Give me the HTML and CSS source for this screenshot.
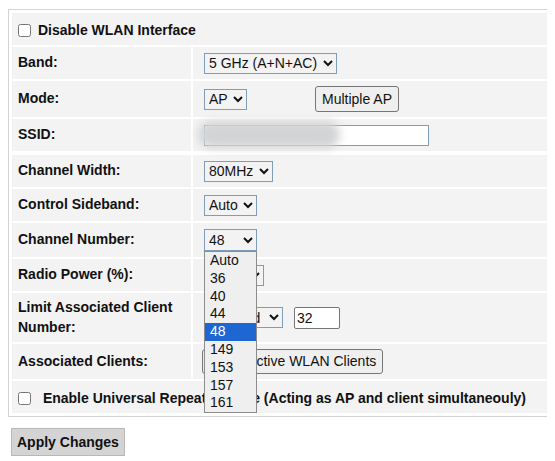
FILE: index.html
```html
<!DOCTYPE html>
<html lang="en">
<head>
    <meta charset="UTF-8">
    <meta name="viewport" content="width=device-width, initial-scale=1.0">
    <title>WLAN Basic Settings</title>
    <link rel="stylesheet" href="styles.css">
</head>
<body>
<form method="post" action="/boafrm/formWlanSetup">
    <div class="frame">
        <table class="tab">
            <tr class="ltr">
                <td colspan="2" class="chk"><input type="checkbox" name="wlanDisabled"> Disable WLAN Interface</td>
            </tr>
            <tr class="ltr">
                <td class="lbl">Band:</td>
                <td class="val">
                    <select name="band">
                        <option>5 GHz (A)</option>
                        <option>5 GHz (N)</option>
                        <option>5 GHz (A+N)</option>
                        <option>5 GHz (AC)</option>
                        <option selected>5 GHz (A+N+AC)</option>
                    </select>
                </td>
            </tr>
            <tr class="ltr">
                <td class="lbl">Mode:</td>
                <td class="val">
                    <select name="mode"><option selected>AP</option></select><input class="btn multi" type="button" value="Multiple AP">
                </td>
            </tr>
            <tr class="ltr">
                <td class="lbl">SSID:</td>
                <td class="val ssid">
                    <input class="txt" type="text" name="ssid" value="">
                    <div class="smudge"></div>
                </td>
            </tr>
            <tr class="gap"><td colspan="2"></td></tr>
            <tr class="ltr">
                <td class="lbl">Channel Width:</td>
                <td class="val">
                    <select name="chanwid">
                        <option>20MHz</option>
                        <option>40MHz</option>
                        <option selected>80MHz</option>
                    </select>
                </td>
            </tr>
            <tr class="ltr">
                <td class="lbl">Control Sideband:</td>
                <td class="val">
                    <select name="ctlband"><option selected>Auto</option></select>
                </td>
            </tr>
            <tr class="ltr tall">
                <td class="lbl">Channel Number:</td>
                <td class="val">
                    <span class="pick">
                        <select name="chan">
                            <option>Auto</option>
                            <option>36</option>
                            <option>40</option>
                            <option>44</option>
                            <option selected>48</option>
                            <option>149</option>
                            <option>153</option>
                            <option>157</option>
                            <option>161</option>
                        </select>
                        <ul class="drop">
                            <li>Auto</li>
                            <li>36</li>
                            <li>40</li>
                            <li>44</li>
                            <li class="on">48</li>
                            <li>149</li>
                            <li>153</li>
                            <li>157</li>
                            <li>161</li>
                        </ul>
                    </span>
                </td>
            </tr>
            <tr class="ltr">
                <td class="lbl">Radio Power (%):</td>
                <td class="val">
                    <select name="RFPower">
                        <option selected>100%</option>
                        <option>70%</option>
                        <option>50%</option>
                        <option>35%</option>
                        <option>15%</option>
                    </select>
                </td>
            </tr>
            <tr class="ltr">
                <td class="lbl">Limit Associated Client Number:</td>
                <td class="val">
                    <select name="wl_limitstanum">
                        <option>Disabled</option>
                        <option selected>Enabled</option>
                    </select><input class="txt num" type="text" name="wl_stanum" value="32">
                </td>
            </tr>
            <tr class="ltr">
                <td class="lbl">Associated Clients:</td>
                <td class="val">
                    <input class="btn clients" type="button" value="Show Active WLAN Clients">
                </td>
            </tr>
            <tr class="ltr">
                <td colspan="2" class="chk"><input class="wide" type="checkbox" name="repeaterEnabled"> Enable Universal Repeater Mode (Acting as AP and client simultaneouly)</td>
            </tr>
        </table>
    </div>
    <input class="apply" type="submit" value="Apply Changes">
</form>
</body>
</html>
```

FILE: styles.css
```css
html {
    overflow: hidden;
}

body {
    margin: 9px 8px 8px;
    font-family: "Liberation Sans", Arial, sans-serif;
    font-size: 14px;
    color: #111;
    background-color: #ffffff;
}

.frame {
    width: 620px;
    border: 1px solid #d3d3d3;
    padding: 1px;
}

.tab {
    width: 100%;
    border-spacing: 2px;
}

.tab td {
    background-color: #f3f3f3;
    padding: 5px 5px 5px 6px;
    line-height: 19.5px;
}

.ltr {
    height: 32px;
}

.tall {
    height: 34px;
}

.gap td {
    padding: 0;
    height: 0;
    background: none;
}

.lbl {
    width: 168px;
    font-weight: bold;
}

.val {
    padding-left: 11px !important;
}

.chk {
    font-weight: bold;
    padding-top: 7px !important;
    padding-bottom: 3px !important;
}

.chk input {
    width: 13px;
    height: 13px;
    margin: 0 3px 0 0;
    vertical-align: -2px;
}

.chk input.wide {
    margin-right: 8px;
}

select {
    font-family: "Liberation Sans", Arial, sans-serif;
    font-size: 14px;
    color: #111;
    background-color: transparent;
    border: 1px solid #7f9db9;
    height: 21px;
    margin: 0;
    padding-right: 2px;
    vertical-align: middle;
}

.txt {
    font-family: "Liberation Sans", Arial, sans-serif;
    font-size: 14px;
    color: #111;
    box-sizing: border-box;
    width: 225px;
    height: 21px;
    padding: 1px 2px;
    margin: 0;
    border: 1px solid #7f9db9;
    background-color: #ffffff;
    vertical-align: middle;
}

.num {
    width: 46px;
    height: 22px;
    margin-left: 11px;
    border-color: #767676;
    border-radius: 2px;
}

.btn {
    font-family: "Liberation Sans", Arial, sans-serif;
    font-size: 14px;
    line-height: 16px;
    color: #111;
    background-color: #efefef;
    border: 1px solid #767676;
    border-radius: 3px;
    padding: 4px 6px;
    margin: 0;
    vertical-align: middle;
}

.multi {
    margin-left: 68px;
}

.clients {
    margin-left: -2px;
    padding: 3px 6px 4px;
}

.ssid {
    position: relative;
}

.smudge {
    position: absolute;
    left: 5px;
    top: 2px;
    width: 142px;
    height: 27px;
    border-radius: 14px;
    background-color: #d3d4d6;
    filter: blur(4px);
}

.pick {
    position: relative;
    display: inline-block;
    vertical-align: middle;
}

.pick select {
    display: block;
    height: 22px;
}

.drop {
    position: absolute;
    top: 100%;
    left: 0;
    right: 0;
    margin: 0;
    padding: 0;
    list-style: none;
    background-color: #efefef;
    border: 1px solid #8c8c8c;
    z-index: 2;
}

.drop li {
    height: 17.8px;
    line-height: 17.8px;
    padding-left: 5px;
    color: #111;
}

.drop .on {
    background-color: #1e66d2;
    color: #ffffff;
}

.apply {
    display: block;
    margin: 11px 0 0 3px;
    font-family: "Liberation Sans", Arial, sans-serif;
    font-size: 14px;
    font-weight: bold;
    line-height: 16px;
    color: #111;
    background-color: #d4d4d4;
    border: 1px solid #b8b8b8;
    border-radius: 0;
    padding: 5px;
}
```
